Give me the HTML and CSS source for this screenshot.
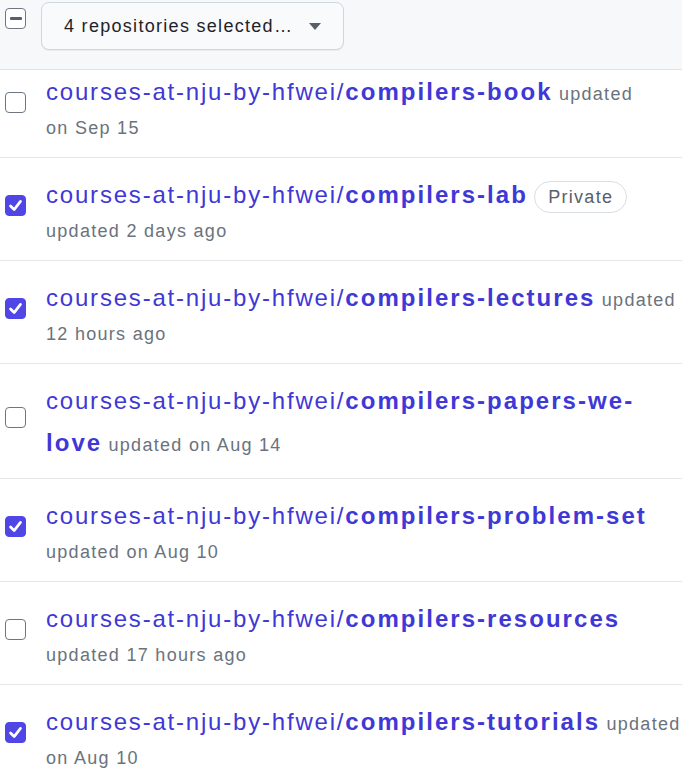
FILE: index.html
```html
<!DOCTYPE html>
<html lang="en">
<head>
<meta charset="utf-8">
<title>Repositories</title>
<link rel="stylesheet" href="styles.css">
</head>
<body>
<div class="header">
  <span class="cb cb-mixed" role="checkbox" aria-checked="mixed"><span class="dash"></span></span>
  <button class="select" type="button"><span class="select-label">4 repositories selected…</span><span class="caret"></span></button>
</div>
<ul class="repo-list">
  <li class="repo">
    <span class="cb" role="checkbox" aria-checked="false"></span>
    <div class="repo-text"><a class="repo-link" href="#">courses-at-nju-by-hfwei/<strong>compilers-book</strong></a> <span class="meta">updated <span class="time">on Sep 15</span></span></div>
  </li>
  <li class="repo">
    <span class="cb cb-on" role="checkbox" aria-checked="true"><svg viewBox="0 0 21 21" width="21" height="21"><path d="M5 11 L9 15 L16 6" fill="none" stroke="#fff" stroke-width="3" stroke-linecap="round" stroke-linejoin="round"/></svg></span>
    <div class="repo-text"><a class="repo-link" href="#">courses-at-nju-by-hfwei/<strong>compilers-lab</strong></a> <span class="badge">Private</span> <span class="meta">updated <span class="time">2 days ago</span></span></div>
  </li>
  <li class="repo">
    <span class="cb cb-on" role="checkbox" aria-checked="true"><svg viewBox="0 0 21 21" width="21" height="21"><path d="M5 11 L9 15 L16 6" fill="none" stroke="#fff" stroke-width="3" stroke-linecap="round" stroke-linejoin="round"/></svg></span>
    <div class="repo-text"><a class="repo-link" href="#">courses-at-nju-by-hfwei/<strong>compilers-lectures</strong></a> <span class="meta">updated <span class="time">12 hours ago</span></span></div>
  </li>
  <li class="repo">
    <span class="cb" role="checkbox" aria-checked="false"></span>
    <div class="repo-text"><a class="repo-link" href="#">courses-at-nju-by-hfwei/<strong>compilers-papers-we-love</strong></a> <span class="meta">updated <span class="time">on Aug 14</span></span></div>
  </li>
  <li class="repo">
    <span class="cb cb-on" role="checkbox" aria-checked="true"><svg viewBox="0 0 21 21" width="21" height="21"><path d="M5 11 L9 15 L16 6" fill="none" stroke="#fff" stroke-width="3" stroke-linecap="round" stroke-linejoin="round"/></svg></span>
    <div class="repo-text"><a class="repo-link" href="#">courses-at-nju-by-hfwei/<strong>compilers-problem-set</strong></a> <span class="meta">updated <span class="time">on Aug 10</span></span></div>
  </li>
  <li class="repo">
    <span class="cb" role="checkbox" aria-checked="false"></span>
    <div class="repo-text"><a class="repo-link" href="#">courses-at-nju-by-hfwei/<strong>compilers-resources</strong></a> <span class="meta">updated <span class="time">17 hours ago</span></span></div>
  </li>
  <li class="repo">
    <span class="cb cb-on" role="checkbox" aria-checked="true"><svg viewBox="0 0 21 21" width="21" height="21"><path d="M5 11 L9 15 L16 6" fill="none" stroke="#fff" stroke-width="3" stroke-linecap="round" stroke-linejoin="round"/></svg></span>
    <div class="repo-text"><a class="repo-link" href="#">courses-at-nju-by-hfwei/<strong>compilers-tutorials</strong></a> <span class="meta">updated <span class="time">on Aug 10</span></span></div>
  </li>
</ul>
</body>
</html>
```
FILE: styles.css
```css
* { box-sizing: border-box; }
html, body {
  margin: 0;
  padding: 0;
  background: #ffffff;
  font-family: "Liberation Sans", Arial, sans-serif;
  overflow: hidden;
}

.header {
  position: sticky;
  top: 0;
  z-index: 2;
  display: flex;
  align-items: flex-start;
  height: 70px;
  padding: 2px 0 0 5px;
  background: #f6f8fa;
  border-bottom: 1px solid #dfe2e6;
}

.cb {
  flex: 0 0 auto;
  width: 21px;
  height: 21px;
  border: 1.5px solid #6e7781;
  border-radius: 4px;
  background: #ffffff;
  display: flex;
  align-items: center;
  justify-content: center;
}
.cb svg { display: block; }
.cb-on {
  background: #4f46e5;
  border-color: #4f46e5;
}
.cb-mixed {
  margin-top: 6px;
  border-color: #6e7781;
}
.dash {
  width: 12px;
  height: 3px;
  border-radius: 1px;
  background: #57606a;
}

.select {
  margin-left: 15px;
  width: 303px;
  height: 48px;
  display: flex;
  align-items: center;
  padding: 0 22px;
  border: 1px solid #d0d7de;
  border-radius: 8px;
  background: #f9fafb;
  box-shadow: 0 1px 0 rgba(31, 35, 40, 0.06);
  font-family: inherit;
  font-size: 18px;
  letter-spacing: 0.072em;
  color: #1f2328;
  text-align: left;
}
.select-label { flex: 1 1 auto; white-space: nowrap; }
.caret {
  width: 0;
  height: 0;
  border-left: 6.5px solid transparent;
  border-right: 6.5px solid transparent;
  border-top: 7px solid #57606a;
}

.repo-list {
  list-style: none;
  margin: -15px 0 0 0;
  padding: 0;
}
.repo {
  display: flex;
  align-items: center;
  gap: 20px;
  padding: 16px 0 14px 5px;
  border-bottom: 1px solid #e5e7eb;
}
.repo .cb { margin-bottom: 9px; }
.repo-text {
  flex: 1 1 auto;
  min-width: 0;
  font-size: 18px;
  line-height: 30px;
  letter-spacing: 0.072em;
  color: #6a737d;
}
.repo-link {
  font-size: 24px;
  line-height: 42px;
  letter-spacing: 0.075em;
  color: #3f38d6;
  text-decoration: none;
}
.repo-link strong {
  font-weight: 700;
  letter-spacing: 0.085em;
}
.meta { color: #6a737d; }
.time { white-space: nowrap; }
.badge {
  display: inline-block;
  padding: 0 13px;
  line-height: 30px;
  border: 1px solid #d8dee4;
  border-radius: 16px;
  font-size: 18px;
  color: #57606a;
}
```
